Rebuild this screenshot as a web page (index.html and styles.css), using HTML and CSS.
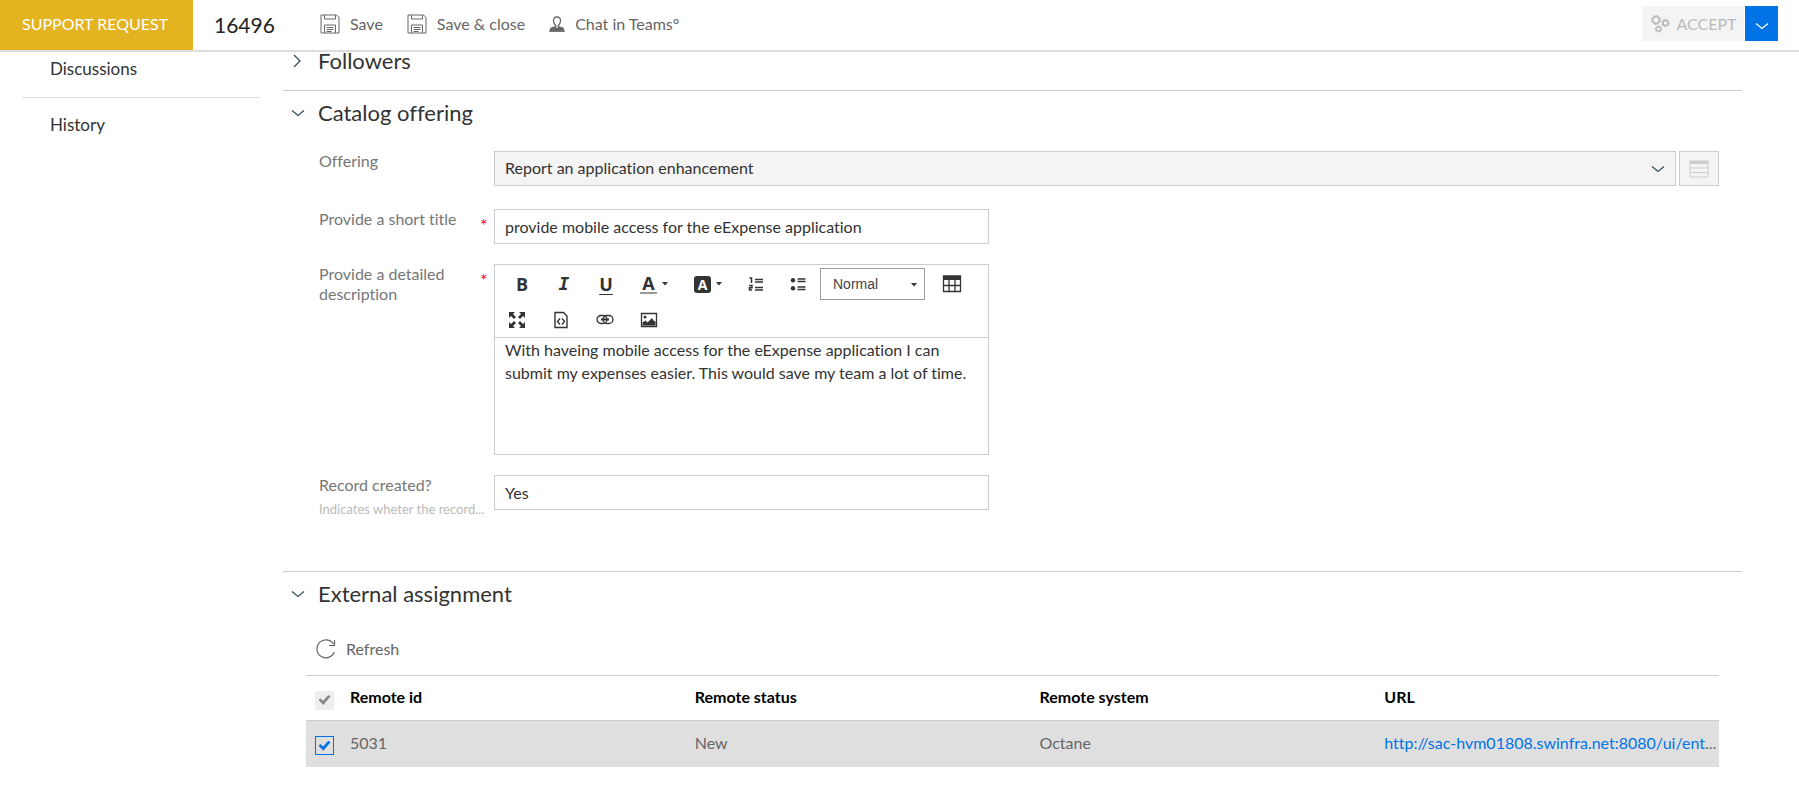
FILE: index.html
```html
<!DOCTYPE html>
<html lang="en">
<head>
<meta charset="utf-8">
<title>Support request 16496</title>
<link rel="stylesheet" href="styles.css">
</head>
<body>
<svg class="defs" aria-hidden="true">
  <symbol id="i-save" viewBox="0 0 20 20"><g fill="none" stroke="currentColor"><path d="M1 1h15.500l2.500 2.500V19H1z"/><path d="M4.500 1v4h11V1M4.500 19v-8h11v8M6.500 13.500h7M6.500 15.500h7M6.500 17.500h5"/></g></symbol>
  <symbol id="i-down" viewBox="0 0 14 8"><path d="M1 1.500l6 5 6-5" fill="none" stroke="currentColor" stroke-width="1.300"/></symbol>
  <symbol id="i-caret" viewBox="0 0 6 4"><path d="M0 0h6L3 3.500z" fill="currentColor"/></symbol>
</svg>
<header class="topbar">
  <div class="badge">SUPPORT REQUEST</div>
  <div class="record-id">16496</div>
  <nav class="actions">
    <button class="action"><svg class="icon20"><use href="#i-save"/></svg>Save</button>
    <button class="action"><svg class="icon20"><use href="#i-save"/></svg>Save &amp; close</button>
    <button class="action"><svg class="icon16" viewBox="0 0 16 16"><path d="M8 1C5.600 1 4.300 2.700 4.500 5c.1 2 .9 3.300 2.200 4.400v1.200L2 12.300 1 15h14l-1-2.700-4.700-1.700V9.400c1.300-1.100 2.100-2.400 2.200-4.400C11.700 2.700 10.400 1 8 1z" fill="none" stroke="currentColor" stroke-width="1.300"/><path d="M.5 15.600l1.300-3.400 4.500-1.800L8 12l1.700-1.600 4.500 1.800 1.300 3.400z" fill="currentColor"/></svg>Chat in Teams°</button>
  </nav>
  <div class="accept-group">
    <button class="accept" disabled><svg class="icon20" viewBox="0 0 20 20"><g fill="none" stroke="currentColor"><circle cx="6" cy="6" r="3.500" stroke-width="1.800"/><circle cx="6" cy="6" r="4.600" stroke-dasharray="1.800 1.800"/><circle cx="15.500" cy="9" r="2.700" stroke-width="1.800"/><circle cx="15.500" cy="9" r="3.700" stroke-dasharray="1.400 1.500"/><circle cx="8.500" cy="15" r="2.300" stroke-width="1.500"/><circle cx="8.500" cy="15" r="3.200" stroke-dasharray="1.200 1.300"/></g></svg>ACCEPT</button>
    <button class="accept-more" aria-label="More actions"><svg class="chevron"><use href="#i-down"/></svg></button>
  </div>
</header>
<div class="layout">
  <nav class="sidebar">
    <a href="#discussions">Discussions</a>
    <a href="#history">History</a>
  </nav>
  <main>
    <section class="followers">
      <h2><svg class="chevron right" viewBox="0 0 14 14"><path d="M3 1l6 6-6 6" fill="none" stroke="currentColor" stroke-width="1.300"/></svg>Followers</h2>
    </section>
    <section class="catalog">
      <h2><svg class="chevron"><use href="#i-down"/></svg>Catalog offering</h2>
      <form class="form">
        <div class="field offering">
          <label for="offering">Offering</label>
          <div class="select-wrap">
            <select id="offering" class="control"><option>Report an application enhancement</option></select>
            <svg class="chevron"><use href="#i-down"/></svg>
          </div>
          <button type="button" class="lookup" aria-label="Open list"><svg viewBox="0 0 20 18" width="20" height="18"><path d="M1 1h18v16H1zM1 8h18M1 12.500h18" fill="none" stroke="currentColor"/><path d="M1 1h18v3H1z" fill="currentColor"/></svg></button>
        </div>
        <div class="field short-title">
          <label for="title">Provide a short title</label><span class="required">*</span>
          <input id="title" class="control" value="provide mobile access for the eExpense application">
        </div>
        <div class="field description">
          <label for="description">Provide a detailed description</label><span class="required">*</span>
          <div class="editor">
            <div class="tools">
              <button type="button" class="tool bold-t">B</button>
              <button type="button" class="tool italic-t">I</button>
              <button type="button" class="tool under-t">U</button>
              <button type="button" class="tool wide"><span class="text-color">A</span><svg class="caret"><use href="#i-caret"/></svg></button>
              <button type="button" class="tool wide"><span class="fill-color">A</span><svg class="caret"><use href="#i-caret"/></svg></button>
              <button type="button" class="tool" aria-label="Numbered list"><svg class="icon16" viewBox="0 0 16 16"><path d="M7 3.500h8M7 6h8M7 11.500h8M7 14h8M1.500 2h2v5M1 9.500h3v2.300H1.500V14H4" fill="none" stroke="currentColor" stroke-width="1.500"/></svg></button>
              <button type="button" class="tool" aria-label="Bulleted list"><svg class="icon16" viewBox="0 0 16 16"><path d="M7.500 3h8M7.500 5.500h8M7.500 11h8M7.500 13.500h8" stroke="currentColor" stroke-width="1.500"/><circle cx="3" cy="4.200" r="2.200" fill="currentColor"/><circle cx="3" cy="12.200" r="2.200" fill="currentColor"/></svg></button>
              <div class="format"><select aria-label="Format"><option>Normal</option></select><svg class="caret"><use href="#i-caret"/></svg></div>
              <button type="button" class="tool wide" aria-label="Table"><svg class="icon20" viewBox="0 0 20 20"><path d="M1.500 2h17v15.500h-17zM1.500 11.500h17M7 5v12.500M13 5v12.500" fill="none" stroke="currentColor" stroke-width="1.300"/><path d="M1 2h18v4H1z" fill="currentColor"/></svg></button>
            </div>
            <div class="tools second">
              <button type="button" class="tool" aria-label="Full screen"><svg viewBox="0 0 18 18" width="18" height="18"><path d="M1 1h6L5 3l3 3-2 2-3-3-2 2zM17 1h-6l2 2-3 3 2 2 3-3 2 2zM1 17h6l-2-2 3-3-2-2-3 3-2-2zM17 17h-6l2-2-3-3 2-2 3 3 2-2z" fill="currentColor"/></svg></button>
              <button type="button" class="tool" aria-label="Source"><svg viewBox="0 0 16 18" width="16" height="18"><path d="M2 1.500h8.500L14 5v11.500H2zM7 7.500L4.500 10.500 7 13.500M9 7.500l2.500 3L9 13.500" fill="none" stroke="currentColor" stroke-width="1.400"/></svg></button>
              <button type="button" class="tool" aria-label="Link"><svg viewBox="0 0 18 12" width="18" height="12"><g fill="none" stroke="currentColor" stroke-width="1.300"><rect x="1" y="1.500" width="10" height="8" rx="4"/><rect x="7" y="1.500" width="10" height="8" rx="4"/><path d="M5 5.500h8" stroke-width="2"/></g></svg></button>
              <button type="button" class="tool" aria-label="Image"><svg viewBox="0 0 18 16" width="18" height="16"><path d="M1.500 1.500h15v13h-15z" fill="none" stroke="currentColor" stroke-width="1.300"/><circle cx="5" cy="5" r="1.500" fill="currentColor"/><path d="M2.500 13.500v-3l3-2 2 2L12 6l1.500 2.500 2 1v4z" fill="currentColor"/></svg></button>
            </div>
            <textarea id="description">With haveing mobile access for the eExpense application I can submit my expenses easier. This would save my team a lot of time.</textarea>
          </div>
        </div>
        <div class="field record">
          <div class="label-stack"><label for="record">Record created?</label><small>Indicates wheter the record...</small></div>
          <input id="record" class="control" value="Yes">
        </div>
      </form>
    </section>
    <section class="external">
      <h2><svg class="chevron"><use href="#i-down"/></svg>External assignment</h2>
      <button class="refresh"><svg class="icon20" viewBox="0 0 20 20"><path d="M18.300 13A9 9 0 1 1 17.500 5M18.500 1v5.500H13" fill="none" stroke="currentColor" stroke-width="1.200"/></svg>Refresh</button>
      <table>
        <thead><tr><th class="check"><input type="checkbox" checked disabled aria-label="Select all"></th><th class="col">Remote id</th><th class="col">Remote status</th><th class="col">Remote system</th><th>URL</th></tr></thead>
        <tbody><tr><td class="check"><input type="checkbox" checked aria-label="Select 5031"></td><td>5031</td><td>New</td><td>Octane</td><td><a href="#entity">http://sac-hvm01808.swinfra.net:8080/ui/ent</a>...</td></tr></tbody>
      </table>
    </section>
  </main>
</div>
</body>
</html>
```

FILE: styles.css
```css
* { box-sizing: border-box; }
body { margin: 0; background: #fff; color: #333; font: 16px/20px Lato, "Open Sans", sans-serif; font-variant-ligatures: none; }
button, input, select, textarea { font: inherit; font-variant-ligatures: none; color: inherit; margin: 0; border-radius: 0; }
button { border: 0; padding: 0; background: none; }
a { text-decoration: none; }
.defs { display: none; }
.icon20 { width: 20px; height: 20px; }
.icon16 { width: 16px; height: 16px; }
.chevron { width: 14px; height: 8px; color: #33515c; }
.chevron.right { height: 14px; }

.topbar { display: flex; height: 52px; border-bottom: 2px solid #ddd; background: #fff; }
.badge { width: 193px; display: flex; align-items: center; padding: 0 0 2px 22px; background: #e3b320; color: #fff; }
.record-id { display: flex; align-items: center; width: 127px; padding-left: 21px; font-size: 21px; color: #222; }
.actions { display: flex; gap: 24px; padding-bottom: 2px; }
.action { display: flex; align-items: center; gap: 10px; color: #666; }
.accept-group { display: flex; gap: 1px; margin: 6px 21px 0 auto; height: 35px; }
.accept { display: flex; align-items: center; justify-content: center; gap: 7px; width: 102px; background: #f4f4f4; color: #bbb; }
.accept-more { width: 33px; background: #0073e7; }
.accept-more .chevron { color: #fff; }

.layout { display: flex; }
.sidebar { width: 260px; margin-right: 23px; padding-left: 22px; flex: none; font-size: 17px; }
.sidebar a { display: block; padding: 17px 28px 18px; color: #333; }
.sidebar a:first-child { padding-top: 7px; border-bottom: 1px solid #ddd; }
main { flex: 1; min-width: 0; margin-right: 57px; }
section { padding: 8px 23px 0 36px; border-bottom: 1px solid #ccc; }
h2 { display: flex; align-items: center; gap: 13px; margin: 0 0 0 -28px; font-size: 22px; line-height: 28px; font-weight: 400; color: #333; }
.followers { height: 39px; padding-top: 0; }
.followers h2 { line-height: 18px; }
.catalog { padding-bottom: 52px; }
.external { border: 0; }

.form { padding-top: 24px; }
.field { display: flex; color: #767676; }
.field > label { width: 155px; flex: none; }
.control { height: 35px; width: 495px; padding: 0 10px 1px; border: 1px solid #ccc; background: #fff; color: #333; outline: 0; }
.offering > label { width: 175px; }
.select-wrap { position: relative; flex: 1; }
.select-wrap .control { width: 100%; appearance: none; background: #f4f4f4; }
.select-wrap .chevron { position: absolute; right: 11px; top: 14px; }
.lookup { width: 40px; height: 35px; margin-left: 3px; border: 1px solid #ccc; background: #f4f4f4; color: #ccc; display: flex; align-items: center; justify-content: center; }
.short-title { margin-top: 23px; }
.required { width: 20px; flex: none; padding: 6px 0 0 6px; color: #f00; font-size: 18px; }
.description { margin-top: 20px; }
.description > label { padding-right: 20px; }
.record { margin-top: 20px; }
.label-stack { width: 175px; flex: none; }
.label-stack label { display: block; }
.label-stack small { display: block; margin-top: 4px; font-size: 13px; color: #bbb; white-space: nowrap; }

.editor { width: 495px; border: 1px solid #ccc; }
.tools { display: flex; align-items: center; height: 38px; padding-left: 6px; }
.tools.second { height: 34px; gap: 20px; padding-left: 10px; }
.tool { width: 42px; height: 28px; flex: none; display: flex; align-items: center; justify-content: center; gap: 5px; color: #333; font: bold 18px/20px "Open Sans", sans-serif; }
.second .tool { width: 24px; }
.italic-t { font-family: "DejaVu Sans Mono", monospace; font-style: italic; }
.under-t { text-decoration: underline; text-underline-offset: 3px; }
.tool.wide { width: 54px; }
.caret { width: 6px; height: 4px; color: #333; }
.text-color { width: 17px; line-height: 18px; border-bottom: 2px solid #999; }
.fill-color { width: 17px; height: 17px; line-height: 17px; font-size: 14px; border-radius: 3px; background: #333; color: #fff; }
.format { position: relative; width: 105px; height: 32px; margin-left: 1px; }
.format select { appearance: none; width: 100%; height: 100%; padding: 0 12px; border: 1px solid #999; background: #fff; font: 14px/20px "Liberation Sans", sans-serif; color: #444; }
.format .caret { position: absolute; right: 8px; top: 15px; }
textarea { display: block; width: 100%; height: 117px; padding: 0 10px; border: 0; border-top: 1px solid #ccc; outline: 0; resize: none; overflow: hidden; color: #333; line-height: 23px; }

.refresh { display: flex; align-items: center; gap: 10px; margin: 31px 0 16px -3px; color: #666; }
table { width: calc(100% + 13px); margin-left: -13px; border-collapse: collapse; table-layout: fixed; }
thead tr { height: 45px; border: solid #ccc; border-width: 1px 0; }
tbody tr { height: 46px; background: #dfdfdf; color: #666; }
th { color: #000; font-weight: 700; }
th, td { padding: 0 0 2px; text-align: left; white-space: nowrap; }
.col { width: 24.4%; }
.check { width: 44px; padding: 4px 0 0 9px; vertical-align: middle; }
td a { color: #0073e7; }
input[type="checkbox"] { appearance: none; display: flex; align-items: center; justify-content: center; width: 19px; height: 19px; border: 1px solid #0073e7; }
input[type="checkbox"]::before { content: ""; width: 12px; height: 10px; background: #0073e7; clip-path: polygon(0 50%, 15% 32%, 38% 58%, 82% 0, 100% 15%, 40% 100%); }
input[type="checkbox"]:disabled { border-color: #eee; background: #eee; }
input[type="checkbox"]:disabled::before { background: #888; }
```
